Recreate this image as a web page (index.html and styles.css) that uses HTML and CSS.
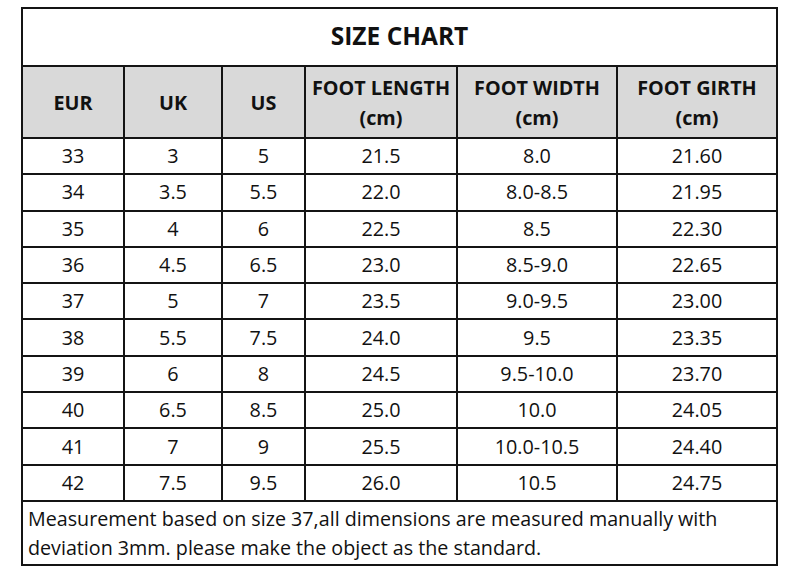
FILE: index.html
```html
<!DOCTYPE html>
<html>
<head>
<meta charset="utf-8">
<link rel="stylesheet" href="styles.css">
</head>
<body>
<table class="chart">
  <colgroup>
    <col class="c1"><col class="c2"><col class="c3"><col class="c4"><col class="c5"><col class="c6">
  </colgroup>
  <tr class="title-row"><td colspan="6">SIZE CHART</td></tr>
  <tr class="head-row">
    <th>EUR</th><th>UK</th><th>US</th>
    <th>FOOT LENGTH<br>(cm)</th><th>FOOT WIDTH<br>(cm)</th><th>FOOT GIRTH<br>(cm)</th>
  </tr>
  <tr><td>33</td><td>3</td><td>5</td><td>21.5</td><td>8.0</td><td>21.60</td></tr>
  <tr><td>34</td><td>3.5</td><td>5.5</td><td>22.0</td><td>8.0-8.5</td><td>21.95</td></tr>
  <tr><td>35</td><td>4</td><td>6</td><td>22.5</td><td>8.5</td><td>22.30</td></tr>
  <tr><td>36</td><td>4.5</td><td>6.5</td><td>23.0</td><td>8.5-9.0</td><td>22.65</td></tr>
  <tr><td>37</td><td>5</td><td>7</td><td>23.5</td><td>9.0-9.5</td><td>23.00</td></tr>
  <tr><td>38</td><td>5.5</td><td>7.5</td><td>24.0</td><td>9.5</td><td>23.35</td></tr>
  <tr><td>39</td><td>6</td><td>8</td><td>24.5</td><td>9.5-10.0</td><td>23.70</td></tr>
  <tr><td>40</td><td>6.5</td><td>8.5</td><td>25.0</td><td>10.0</td><td>24.05</td></tr>
  <tr><td>41</td><td>7</td><td>9</td><td>25.5</td><td>10.0-10.5</td><td>24.40</td></tr>
  <tr><td>42</td><td>7.5</td><td>9.5</td><td>26.0</td><td>10.5</td><td>24.75</td></tr>
  <tr class="note-row"><td colspan="6">Measurement based on size 37,all dimensions are measured manually with deviation 3mm. please make the object as the standard.</td></tr>
</table>
</body>
</html>
```

FILE: styles.css
```css
html, body {
  margin: 0;
  padding: 0;
  background: #fff;
}
body {
  padding: 7px 0 0 21px;
  font-family: "Open Sans", "Liberation Sans", sans-serif;
  color: #111;
}
.chart {
  border-collapse: collapse;
  table-layout: fixed;
  width: 755px;
}
.c1 { width: 102px; }
.c2 { width: 98px; }
.c3 { width: 83px; }
.c4 { width: 152px; }
.c5 { width: 160px; }
.c6 { width: 160px; }
.chart td, .chart th {
  border: 2px solid #141414;
  padding: 0;
  text-align: center;
  font-size: 19.8px;
  font-weight: 400;
  height: 34.3px;
  line-height: 24px;
}
.title-row td {
  height: 54px;
  font-size: 24.5px;
  font-weight: 700;
  padding-top: 0;
  padding-bottom: 2px;
}
.head-row th {
  height: 69px;
  background: #d9d9d9;
  font-weight: 700;
  font-size: 19.8px;
  line-height: 30px;
  padding-top: 1px;
}
.note-row td {
  height: 62px;
  text-align: left;
  padding: 0 0 0 5px;
  line-height: 29px;
  font-size: 19.7px;
}
```
